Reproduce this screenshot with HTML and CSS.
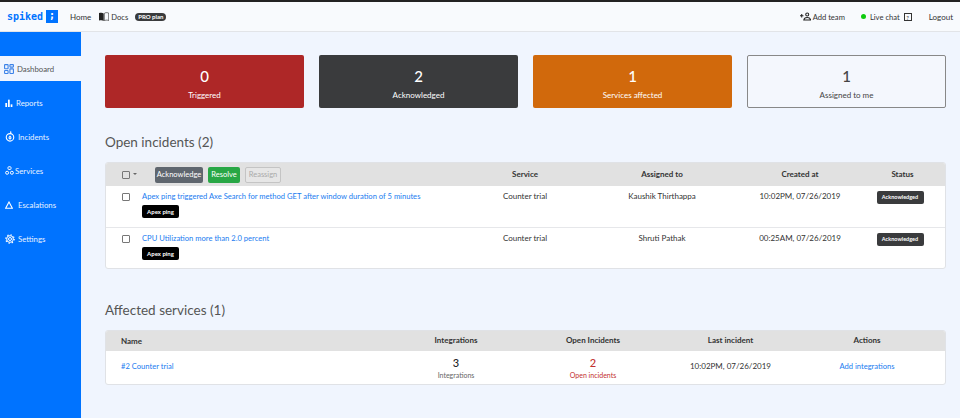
FILE: index.html
```html
<!DOCTYPE html>
<html lang="en">

<head>
  <meta charset="UTF-8" />
  <meta name="viewport" content="width=device-width, initial-scale=1.0" />
  <title>spiked - Dashboard</title>
  <link rel="stylesheet" href="styles.css">
</head>

<body>
  <header class="topbar">
    <div class="topbar-left">
      <a class="logo">spiked <span class="logo-mark">;</span></a>
      <a class="nav-link nav-home">Home</a>
      <a class="nav-link nav-docs">
        <svg class="docs-icon" viewBox="0 0 16 14" width="10" height="9">
          <path d="M0 1.500C3 .5 5.500 .5 7.500 2V14C5.500 12.500 3 12.500 0 13.500Z" fill="#222" />
          <path d="M8.500 2C10.500 .5 13 .5 15.500 1.500V13.500C13 12.500 10.500 12.500 8.500 14Z" fill="none" stroke="#222" />
        </svg>
        Docs
      </a>
      <span class="plan-badge">PRO plan</span>
    </div>
    <div class="topbar-right">
      <a class="nav-link nav-icon-link">
        <svg viewBox="0 0 16 12" width="11" height="9" fill="none" stroke="#222" stroke-width="1.500">
          <path d="M0 5h5M2.500 2.500v5" />
          <circle cx="10.500" cy="3" r="2.200" />
          <path d="M5.500 11.200c.5-3 2.500-3.700 5-3.700s4.500.7 5 3.700z" />
        </svg>
        Add team
      </a>
      <a class="nav-link nav-icon-link chat-link">
        <span class="online-dot"></span>
        Live chat
        <span class="help-box">?</span>
      </a>
      <a class="nav-link logout">Logout</a>
    </div>
  </header>

  <div class="layout">
    <aside class="sidebar">
      <a class="side-item active">
        <svg viewBox="0 0 12 12" width="10" height="10" fill="none" stroke="#3b82e8" stroke-width="1.300">
          <rect x="0.700" y="0.700" width="4.200" height="5" rx="0.600" />
          <rect x="7.100" y="0.700" width="4.200" height="3" rx="0.600" />
          <rect x="0.700" y="7.800" width="4.200" height="3.500" rx="0.600" />
          <rect x="7.100" y="5.800" width="4.200" height="5.500" rx="0.600" />
        </svg>
        Dashboard
      </a>
      <a class="side-item">
        <svg viewBox="0 0 12 12" width="8" height="8" fill="#fff">
          <rect x="0.500" y="6" width="2.600" height="6" />
          <rect x="4.500" y="1" width="2.600" height="11" />
          <rect x="8.500" y="8" width="2.600" height="4" />
        </svg>
        Reports
      </a>
      <a class="side-item">
        <svg viewBox="0 0 12 13" width="10" height="11" fill="none" stroke="#fff" stroke-width="1.300">
          <circle cx="6" cy="7.500" r="4.500" />
          <path d="M6 3C7.500 2 7 1 6.500 .5M6 6c-1.500 1-1.500 3 0 3.500 1.500-.5 1.500-2.500 0-3.500z" />
        </svg>
        Incidents
      </a>
      <a class="side-item item-services">
        <svg viewBox="0 0 12 12" width="9" height="9" fill="none" stroke="#fff" stroke-width="1.300">
          <rect x="4" y="1" width="4" height="3.600" rx="1" />
          <circle cx="2.800" cy="9" r="2" />
          <circle cx="9.200" cy="9" r="2" />
        </svg>
        Services
      </a>
      <a class="side-item item-escalations">
        <svg viewBox="0 0 12 12" width="8" height="8" fill="none" stroke="#fff" stroke-width="1.600">
          <path d="M6 1.500 11 10.800H1z" />
        </svg>
        Escalations
      </a>
      <a class="side-item">
        <svg viewBox="0 0 12 12" width="10" height="10" fill="none" stroke="#fff" stroke-width="1.200">
          <circle cx="6" cy="6" r="1.800" />
          <circle cx="6" cy="6" r="4" />
          <circle cx="6" cy="6" r="5" stroke-dasharray="1.600 2.330" stroke-width="1.600" />
        </svg>
        Settings
      </a>
    </aside>

    <main class="content">
      <section class="cards">
        <div class="card card-red"><strong>0</strong><span>Triggered</span></div>
        <div class="card card-dark"><strong>2</strong><span>Acknowledged</span></div>
        <div class="card card-orange"><strong>1</strong><span>Services affected</span></div>
        <div class="card card-outline"><strong>1</strong><span>Assigned to me</span></div>
      </section>

      <h2 class="section-title">Open incidents (2)</h2>
      <section class="panel">
        <div class="incident-row panel-head">
          <div class="bulk-actions">
            <span class="checkbox"></span>
            <span class="caret"></span>
            <button class="btn btn-gray">Acknowledge</button>
            <button class="btn btn-green">Resolve</button>
            <button class="btn btn-disabled">Reassign</button>
          </div>
          <div class="cell">Service</div>
          <div class="cell">Assigned to</div>
          <div class="cell">Created at</div>
          <div class="cell status-head">Status</div>
        </div>
        <div class="incident-row panel-row">
          <div class="incident-main">
            <span class="checkbox"></span>
            <div>
              <a class="link">Apex ping triggered Axe Search for method GET after window duration of 5 minutes</a>
              <span class="tag">Apex ping</span>
            </div>
          </div>
          <div class="cell">Counter trial</div>
          <div class="cell">Kaushik Thirthappa</div>
          <div class="cell">10:02PM, 07/26/2019</div>
          <div class="cell"><span class="status">Acknowledged</span></div>
        </div>
        <div class="incident-row panel-row">
          <div class="incident-main">
            <span class="checkbox"></span>
            <div>
              <a class="link">CPU Utilization more than 2.0 percent</a>
              <span class="tag">Apex ping</span>
            </div>
          </div>
          <div class="cell">Counter trial</div>
          <div class="cell">Shruti Pathak</div>
          <div class="cell">00:25AM, 07/26/2019</div>
          <div class="cell"><span class="status">Acknowledged</span></div>
        </div>
      </section>

      <h2 class="section-title title-affected">Affected services (1)</h2>
      <section class="panel">
        <div class="service-row panel-head">
          <div>Name</div>
          <div class="cell">Integrations</div>
          <div class="cell">Open Incidents</div>
          <div class="cell">Last incident</div>
          <div class="cell">Actions</div>
        </div>
        <div class="service-row service-body">
          <div><a class="link">#2 Counter trial</a></div>
          <div class="cell stat"><strong>3</strong><span>Integrations</span></div>
          <div class="cell stat stat-red"><strong>2</strong><span>Open incidents</span></div>
          <div class="cell">10:02PM, 07/26/2019</div>
          <div class="cell"><a class="link">Add integrations</a></div>
        </div>
      </section>
    </main>
  </div>
</body>

</html>
```

FILE: styles.css
```css
* {
  box-sizing: border-box;
}

html,
body {
  height: 100%;
}

body {
  margin: 0;
  font-family: Lato, "Noto Sans", sans-serif;
  font-size: 8px;
  color: #333;
  background-color: #f0f5fe;
  overflow: hidden;
}

.topbar {
  display: flex;
  justify-content: space-between;
  align-items: center;
  height: 32px;
  padding: 0 7px;
  border-top: 2px solid #222;
  border-bottom: 1px solid #e2e4e8;
  background: #f8fafd;
}

.topbar-left,
.topbar-right {
  display: flex;
  align-items: center;
}

.logo {
  display: flex;
  align-items: center;
  gap: 3px;
  width: 51px;
  font-family: "DejaVu Sans Mono", monospace;
  font-size: 10px;
  font-weight: 700;
  color: #0073ff;
}

.logo-mark {
  width: 12px;
  height: 13px;
  line-height: 12px;
  text-align: center;
  color: #fff;
  background: #0073ff;
}

.nav-link {
  display: flex;
  align-items: center;
  font-size: 8px;
  color: #333;
}

.nav-home {
  margin-left: 12px;
}

.nav-docs {
  gap: 2px;
  margin-left: 8px;
  font-size: 7.600px;
}

.plan-badge {
  margin-left: 7px;
  padding: 0 3px;
  font-size: 6px;
  font-weight: 700;
  line-height: 8px;
  color: #fff;
  background: #3a3b3d;
  border-radius: 4px;
}

.nav-icon-link {
  gap: 2px;
  font-size: 7.600px;
}

.chat-link {
  gap: 4px;
  margin-left: 16px;
}

.online-dot {
  width: 5px;
  height: 5px;
  border-radius: 50%;
  background: #0ecb0e;
}

.help-box {
  width: 8px;
  height: 8px;
  font-size: 6px;
  line-height: 7px;
  text-align: center;
  border: 1px solid #333;
}

.logout {
  margin-left: 17px;
}

.layout {
  display: flex;
  height: calc(100% - 32px);
}

.sidebar {
  flex: none;
  width: 81px;
  padding-top: 24px;
  background: #0073ff;
}

.side-item {
  display: flex;
  align-items: center;
  gap: 3px;
  height: 34px;
  padding-left: 5px;
  padding-bottom: 9px;
  font-size: 7.800px;
  color: #e8f2ff;
}

.side-item.active {
  height: 25px;
  margin-bottom: 9px;
  padding-bottom: 0;
  padding-left: 4px;
  color: #555;
  background: #f0f5fe;
}

.item-services {
  gap: 1px;
}

.item-escalations {
  gap: 5px;
}

.content {
  flex: 1;
  padding: 23px 14px 0 24px;
}

.cards {
  display: grid;
  grid-template-columns: repeat(4, 1fr);
  gap: 15px;
}

.card {
  display: flex;
  flex-direction: column;
  align-items: center;
  height: 53px;
  padding-top: 11px;
  color: #fff;
  border-radius: 2px;
}

.card strong {
  font-size: 15px;
  font-weight: 500;
  line-height: 20px;
}

.card span {
  margin-top: 4px;
  font-size: 8px;
  line-height: 11px;
}

.card-red {
  background: #ae2727;
}

.card-dark {
  background: #3a3b3d;
}

.card-orange {
  background: #d1690c;
}

.card-outline {
  color: #444;
  background: #f4f7fd;
  border: 1px solid #888;
  padding-top: 10px;
}

.section-title {
  margin: 24px 0 10px;
  font-size: 13.500px;
  font-weight: 400;
  line-height: 20px;
  color: #555;
}

.title-affected {
  margin-top: 31px;
}

.panel {
  background: #fff;
  border: 1px solid #e0e2e6;
  border-radius: 3px;
  overflow: hidden;
}

.panel-head {
  font-weight: 700;
  color: #333;
  background: #e1e1e1;
}

.incident-row {
  display: grid;
  grid-template-columns: 351px 136px 138px 138px 62px;
}

.incident-row.panel-head {
  height: 23px;
  align-items: center;
}

.panel-row {
  height: 41px;
  padding-top: 5px;
  border-top: 1px solid #e6e7ea;
}

.panel-head + .panel-row {
  border-top: 0;
}

.cell {
  text-align: center;
  line-height: 11px;
}

.status-head {
  padding-left: 5px;
}

.bulk-actions {
  display: flex;
  align-items: center;
  padding-left: 16px;
}

.checkbox {
  flex: none;
  display: block;
  width: 8px;
  height: 8px;
  background: #fff;
  border: 1px solid #777;
  border-radius: 1px;
}

.panel-head .checkbox {
  background: #e1e1e1;
}

.caret {
  width: 0;
  height: 0;
  margin-left: 3px;
  margin-bottom: 2px;
  border: 2.500px solid transparent;
  border-top-color: #666;
  border-bottom: 0;
}

.btn {
  height: 16px;
  padding: 0;
  font-family: inherit;
  font-size: 7.500px;
  line-height: 14px;
  border: 1px solid transparent;
  border-radius: 2px;
}

.btn-gray {
  margin-left: 18px;
  width: 48px;
  color: #fff;
  background: #5f666e;
}

.btn-green {
  margin-left: 5px;
  width: 32px;
  color: #fff;
  background: #28a745;
}

.btn-disabled {
  margin-left: 5px;
  width: 36px;
  color: #aaa;
  background: #e6e6e6;
  border-color: #c4c4c4;
}

.incident-main {
  display: flex;
  align-items: flex-start;
  gap: 12px;
  padding-left: 16px;
}

.incident-main .checkbox {
  margin-top: 2px;
}

.link {
  display: block;
  font-size: 7.600px;
  line-height: 11px;
  color: #1a7cf0;
}

.tag {
  display: inline-block;
  margin-top: 3px;
  width: 37px;
  text-align: center;
  font-size: 6px;
  font-weight: 700;
  line-height: 13px;
  color: #fff;
  background: #000;
  border-radius: 2px;
}

.status {
  display: inline-block;
  width: 47px;
  font-size: 5.500px;
  font-weight: 700;
  line-height: 13px;
  text-align: center;
  color: #fff;
  background: #3a3b3d;
  border-radius: 2px;
}

.service-row {
  display: grid;
  grid-template-columns: 267px 136px 138px 137px 136px;
  padding-left: 15px;
}

.service-row.panel-head {
  height: 20px;
  padding-bottom: 1px;
  align-items: center;
}

.service-body {
  height: 33px;
  padding-bottom: 2px;
  align-items: center;
}

.stat {
  display: flex;
  flex-direction: column;
  align-items: center;
  padding-top: 2px;
}

.stat strong {
  font-size: 11px;
  font-weight: 500;
  line-height: 14px;
  color: #222;
}

.stat span {
  font-size: 7px;
  line-height: 10px;
  color: #666;
}

.stat-red strong,
.stat-red span {
  color: #c23030;
}
```
